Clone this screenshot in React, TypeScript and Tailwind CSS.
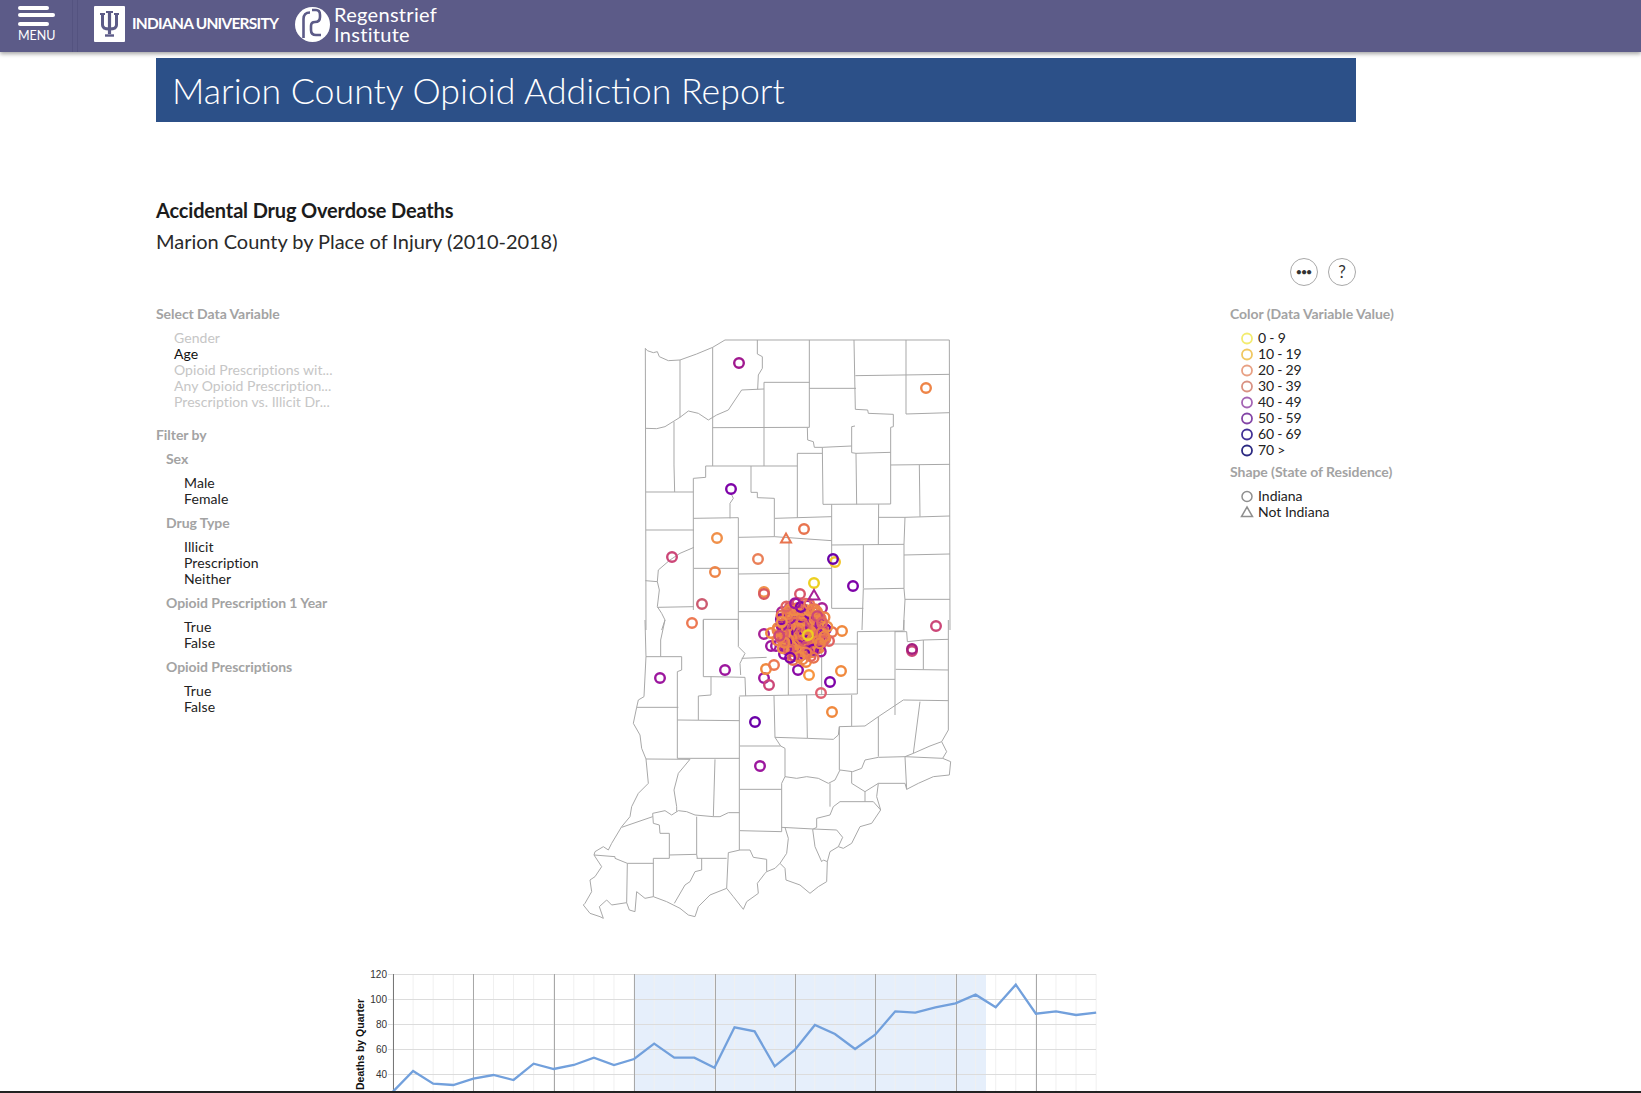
import React from 'react';

const fontLato = { fontFamily: 'Lato, "Open Sans", sans-serif' };

// county borders, traced in 3x units from the top of the map (origin 570,330)
const NORTH_LINES = [
  'M228,900 L226,55 L232,62 L250,68 L262,65 L268,80 L295,92 L330,90 L380,72 L428,52 L465,30 L1138,30 L1140,900',
  'M330,90 L330,262',
  'M428,52 L428,408',
  'M562,30 L562,72 L577,80 L577,115 L565,135 L563,178',
  'M718,30 L718,292 L712,292 L713,330 L730,335 L733,352 L757,352',
  'M852,30 L856,238',
  'M1008,30 L1008,252',
  'M856,137 L1138,133',
  'M228,295 L260,296 L285,290 L330,262 L355,243 L385,250 L415,270 L440,255 L475,240 L495,210 L515,180 L582,177',
  'M582,157 L582,408',
  'M582,157 L718,157',
  'M718,175 L858,175',
  'M428,293 L712,292',
  'M312,275 L312,405 L314,486',
  'M228,486 L370,486',
  'M407,408 L407,442 L370,445 L370,840',
  'M407,408 L682,408',
  'M543,408 L543,487 L562,487 L562,503 L613,505 L613,620',
  'M682,370 L682,563',
  'M682,370 L757,370',
  'M757,352 L845,348',
  'M757,352 L759,523',
  'M858,370 L860,523',
  'M845,368 L858,370 L962,367',
  'M845,290 L845,368',
  'M845,290 L855,288',
  'M856,238 L893,240 L895,250 L970,253 L970,290 L962,292 L962,522',
  'M1008,252 L1140,248',
  'M759,523 L962,522',
  'M962,405 L1140,403',
  'M1048,405 L1050,560',
  'M926,522 L925,643',
  'M926,562 L1005,562 L1140,558',
  'M785,523 L785,835',
  'M1005,562 L1002,643',
  'M785,645 L1002,643',
  'M880,645 L880,775 L876,900',
  'M1002,643 L1002,775 L1005,810 L1000,900',
  'M1002,675 L1140,672',
  'M882,777 L1002,775',
  'M1005,808 L1140,808',
  'M370,565 L505,563 L505,900',
  'M480,565 L480,520 L490,505 L483,490',
  'M615,565 L785,560',
  'M505,622 L613,620 L785,632',
  'M657,632 L657,845',
  'M657,715 L785,715',
  'M505,732 L657,730',
  'M372,715 L505,715',
  'M228,600 L372,600',
  'M372,652 L330,670 L300,690 L265,720 L262,755 L268,780 L262,830 L275,850 L285,870 L275,900',
  'M226,752 L262,755',
  'M262,832 L372,830',
  'M505,845 L660,845',
  'M400,868 L505,868',
  'M400,868 L400,900',
  'M785,835 L880,835',
];

// same thing for the bottom half (origin 570,620)
const SOUTH_LINES = [
  'M225,0 L228,110 L222,230 L205,240 L200,262 L190,310 L210,345 L215,385 L228,417 L235,490 L205,520 L185,560 L180,590 L155,620 L125,670 L115,690 L100,680 L75,695 L72,705 L95,740 L75,770 L60,780 L65,815 L45,850 L40,855 L60,880 L90,890 L100,895 L88,860 L110,840 L125,855 L170,848 L178,870 L195,875 L200,815 L225,835 L250,830 L290,845 L330,865 L355,885 L375,890 L385,860 L420,825 L470,805 L490,830 L520,868 L530,845 L565,820 L562,790 L585,760 L590,755 L615,745 L630,730 L645,745 L648,780 L690,795 L720,820 L745,800 L770,785 L772,725 L780,695 L805,680 L820,685 L845,670 L870,620 L905,610 L932,570 L920,530 L925,490 L1005,490 L1010,508 L1045,490 L1090,470 L1138,465 L1142,425 L1118,415 L1130,395 L1115,365 L1135,330 L1135,0',
  'M228,110 L335,110 L335,150 L322,155 L322,415',
  'M285,0 L272,60 L272,110',
  'M200,262 L325,262',
  'M400,0 L400,170 L423,170 L423,225 L385,228 L385,300',
  'M423,170 L525,172 L527,228',
  'M505,0 L505,80 L525,100 L510,130 L512,165',
  'M322,300 L508,302',
  'M508,230 L508,690',
  'M515,115 L590,112',
  'M508,228 L862,222 L862,35 L1000,33',
  'M755,72 L862,72',
  'M755,72 L755,225',
  'M655,110 L655,225',
  'M612,228 L615,352 L712,355 L790,358 L805,345 L808,320 L885,318 L925,290 L1000,240 L1135,242',
  'M710,225 L712,355',
  'M845,225 L845,318',
  'M862,178 L975,178',
  'M975,33 L975,285',
  'M975,35 L1010,35 L1012,65 L1060,60 L1135,58',
  'M1060,60 L1060,148',
  'M977,148 L1135,150',
  'M1002,0 L1002,33',
  'M1050,245 L1030,400 L1080,378 L1115,365',
  'M925,290 L925,410',
  'M808,320 L808,450',
  'M1030,400 L1005,410 L1118,415',
  'M1005,410 L1010,508',
  'M925,412 L1005,410',
  'M925,412 L885,420 L875,445 L848,455 L810,450 L795,480 L775,490 L745,475 L710,470 L680,475 L645,470 L635,490 L635,635',
  'M510,378 L632,378 L645,385 L645,470',
  'M615,352 L632,378',
  'M322,415 L508,415',
  'M228,417 L360,418 L325,460 L312,510 L320,560 L320,575',
  'M435,418 L430,590',
  'M510,508 L635,508',
  'M510,632 L635,635',
  'M635,622 L730,627 L800,630 L818,652 L805,680',
  'M248,580 L285,572 L305,585 L325,572 L350,575 L375,585 L430,590 L450,590 L475,578 L508,578',
  'M248,580 L250,610 L268,615 L270,640 L298,640 L298,715 L250,715 L250,830',
  'M155,622 L248,590',
  'M298,705 L380,703 L380,590',
  'M380,715 L470,715',
  'M380,703 L382,715',
  'M72,705 L135,710 L135,715 L172,730 L250,730',
  'M172,730 L170,848',
  'M395,715 L395,750 L375,755 L360,785 L345,795 L313,850',
  'M475,698 L510,690 L540,690 L550,712 L590,718 L590,755',
  'M475,698 L470,805',
  'M630,730 L650,700 L655,655 L645,622',
  'M772,725 L760,720 L755,725 L735,680 L728,628 L740,622 L740,595 L780,585 L790,560 L810,545 L910,545 L932,570',
  'M780,490 L780,560',
  'M885,515 L885,545',
  'M845,455 L845,490 L885,515 L925,490',
];

const POINTS: [number, number, string][] = [
  [739, 363, '#a0188f'], [926, 388, '#ee8548'], [731, 489, '#7e03a8'], [804, 529, '#e8744f'],
  [717, 538, '#f0904a'], [758, 559, '#ea8058'], [672, 557, '#cc4778'], [715, 572, '#ee8548'],
  [835, 562, '#f2c62c'], [833, 559, '#6a00a8'], [764, 592, '#f0904a'], [764, 594, '#d9595f'],
  [814, 583, '#edd020'], [853, 586, '#7e03a8'], [800, 594, '#d8576b'], [702, 604, '#cc5a70'],
  [692, 623, '#ed7953'], [936, 626, '#cc4778'], [912, 651, '#cc4778'], [912, 649, '#a51f7f'],
  [660, 678, '#9c179e'], [725, 670, '#9c179e'], [755, 722, '#6a00a8'], [760, 766, '#9c179e'],
  [832, 712, '#f0893e'], [821, 693, '#e06070'], [841, 671, '#f0893e'], [830, 682, '#7e03a8'],
  [809, 675, '#f89540'], [798, 670, '#8b0aa5'], [764, 678, '#9c179e'], [769, 685, '#cc4778'],
  [766, 669, '#f0893e'], [774, 665, '#ed7953'], [842, 631, '#f0893e'], [832, 632, '#e8744f'],
  [829, 641, '#e16462'], [764, 634, '#a82296'], [771, 646, '#9c179e'], [771, 633, '#f0893e'],
  [776, 646, '#9c179e'], [784, 654, '#8b0aa5'], [793, 660, '#e8744f'], [806, 662, '#f0893e'],
  [822, 608, '#a82296'], [790, 607, '#d8576b'], [782, 612, '#a82296'],
];

// the pile over Indianapolis, a fixed pseudo random spread
const CLUSTER_COLORS = ['#ee8548', '#e8744f', '#ef8a47', '#e16462', '#ee8548', '#9c179e', '#ed7953', '#cc4778', '#f0904a', '#e16462', '#7e03a8', '#ee8548'];
const CLUSTER = Array.from({ length: 230 }, (_, i) => {
  const angle = i * 2.39996;
  const dist = Math.sqrt((i + 1) / 230);
  const wobble = 1 + 0.14 * Math.sin(i * 1.7);
  return {
    x: 802 + Math.cos(angle) * dist * 24 * wobble,
    y: 631 + Math.sin(angle) * dist * 27 * wobble,
    c: CLUSTER_COLORS[(i * 7) % CLUSTER_COLORS.length],
  };
});

const SERIES = [425, 363, 401, 405, 386, 375, 390, 341, 357, 345, 323, 345, 327, 281, 323, 323, 353, 232, 244, 349, 300, 225, 252, 297, 254, 184, 188, 172, 160, 134, 172, 104, 191, 184, 195, 188];
const LINE = SERIES.map((y, i) => `${393 + i * 20.09},${950 + y / 3}`).join(' ');

const AGE_LEGEND = [
  { label: '0 - 9', color: '#f3ec70' },
  { label: '10 - 19', color: '#f0c862' },
  { label: '20 - 29', color: '#e8a184' },
  { label: '30 - 39', color: '#d99283' },
  { label: '40 - 49', color: '#a565b4' },
  { label: '50 - 59', color: '#8345a6' },
  { label: '60 - 69', color: '#423196' },
  { label: '70 >', color: '#2c2a82' },
];

function Header() {
  return (
    <header className="relative z-10 h-[52px] bg-[#5c5b88] shadow-[0_2px_4px_rgba(0,0,0,0.35)] flex items-stretch text-white">
      <div className="w-[73px] border-r border-[#545380] pl-[18px] pt-[6px]">
        <div className="h-[4px] w-[31px] rounded-sm bg-white" />
        <div className="h-[4px] w-[37px] rounded-sm bg-white mt-[3px]" />
        <div className="h-[4px] w-[31px] rounded-sm bg-white mt-[5px]" />
        <div className="text-[12.5px] leading-[14px] mt-[3px]">MENU</div>
      </div>
      <div className="w-[5px] border-r border-[#545380]" />
      <div className="ml-[16px] mt-[6px] w-[31px] h-[36px] bg-white rounded-[1px] flex items-center justify-center">
        <svg width="21" height="26" viewBox="0 0 21 26" fill="none" stroke="#5c5b88">
          <path d="M1 3H6M15 3H20M7 1H14" strokeWidth="2" />
          <path d="M3.5 3V14Q3.5 18 10.5 18Q17.5 18 17.5 14V3" strokeWidth="3" />
          <path d="M10.5 1V23" strokeWidth="3.2" />
          <path d="M6 24.5H15" strokeWidth="2.4" />
        </svg>
      </div>
      <div className="ml-[7px] mt-[14px] w-[150px] text-[15.5px] leading-[19px] font-bold whitespace-nowrap tracking-[-0.75px]">
        INDIANA UNIVERSITY
      </div>
      <div className="ml-[13px] mt-[7px] w-[35px] h-[35px]">
        <svg width="35" height="35" viewBox="0 0 35 35" fill="none">
          <circle cx="17.5" cy="17.5" r="17.5" fill="#ffffff" />
          <path d="M8.5 31V12Q8.5 5.5 15 5.5V5.5" stroke="#5c5b88" strokeWidth="2.6" />
          <path d="M17 3H21Q25 3 25 8V10Q25 15 20 15Q16 15 16 19V23Q16 28 21 28H26" stroke="#5c5b88" strokeWidth="2.6" />
        </svg>
      </div>
      <div className="ml-[4px] mt-[4px] text-[20px] leading-[20px] tracking-[0.3px]">
        <div>Regenstrief</div>
        <div>Institute</div>
      </div>
    </header>
  );
}

function SectionTitle({ children, indent }: { children: React.ReactNode; indent?: boolean }) {
  return (
    <div className={`h-4 text-[14px] leading-4 font-bold text-[#a3a3a3] tracking-[-0.05px] ${indent ? 'ml-[10px]' : ''}`}>
      {children}
    </div>
  );
}

function FilterGroup({ title, items, first }: { title: string; items: string[]; first?: boolean }) {
  return (
    <div className={first ? 'mt-[8px]' : 'mt-2'}>
      <SectionTitle indent>{title}</SectionTitle>
      <div className="mt-2 ml-[28px] text-[14px] leading-4 text-[#222222] tracking-[0.1px]">
        {items.map((item) => (
          <div key={item}>{item}</div>
        ))}
      </div>
    </div>
  );
}

function Sidebar() {
  const variables = ['Gender', 'Age', 'Opioid Prescriptions wit...', 'Any Opioid Prescription...', 'Prescription vs. Illicit Dr...'];
  return (
    <div className="w-[570px] shrink-0 pl-[156px]">
      <SectionTitle>Select Data Variable</SectionTitle>
      <div className="mt-2 ml-[18px] text-[14px] leading-4 text-[#c6c6c6] tracking-[0.05px]">
        {variables.map((v) => (
          <div key={v} className={v === 'Age' ? 'text-[#111111]' : ''}>
            {v}
          </div>
        ))}
      </div>
      <div className="mt-[17px]">
        <SectionTitle>Filter by</SectionTitle>
      </div>
      <FilterGroup first title="Sex" items={['Male', 'Female']} />
      <FilterGroup title="Drug Type" items={['Illicit', 'Prescription', 'Neither']} />
      <FilterGroup title="Opioid Prescription 1 Year" items={['True', 'False']} />
      <FilterGroup title="Opioid Prescriptions" items={['True', 'False']} />
    </div>
  );
}

function IndianaMap() {
  return (
    <svg className="mt-[24px] shrink-0" width="400" height="600" viewBox="570 330 400 600" fill="none">
      <g transform="translate(570 330) scale(0.33333)" stroke="#a8a8a8" strokeWidth="3">
        {NORTH_LINES.map((d) => (
          <path key={d} d={d} />
        ))}
      </g>
      <g transform="translate(570 620) scale(0.33333)" stroke="#a8a8a8" strokeWidth="3">
        {SOUTH_LINES.map((d) => (
          <path key={d} d={d} />
        ))}
      </g>
      <g strokeWidth="2.4">
        {POINTS.map(([x, y, c], i) => (
          <circle key={i} cx={x} cy={y} r="4.8" stroke={c} />
        ))}
        {CLUSTER.map((p, i) => (
          <circle key={i} cx={p.x} cy={p.y} r="4.8" stroke={p.c} />
        ))}
        <circle cx="808" cy="635" r="4.8" stroke="#edd020" />
        <path d="M786 533.5L791 542.5H781Z" stroke="#e8744f" strokeWidth="2" />
        <path d="M814 590L819.5 599.5H808.5Z" stroke="#a82296" strokeWidth="2" />
      </g>
    </svg>
  );
}

function Legend() {
  return (
    <div className="ml-[260px] w-[220px]">
      <SectionTitle>Color (Data Variable Value)</SectionTitle>
      <div className="mt-2 text-[14px] leading-4 text-[#222222] tracking-[-0.2px]">
        {AGE_LEGEND.map((row) => (
          <div key={row.label} className="flex items-center pl-[10px] gap-[4px]">
            <svg width="14" height="14" viewBox="0 0 14 14" fill="none">
              <circle cx="7" cy="7.5" r="5" stroke={row.color} strokeWidth="1.8" />
            </svg>
            <span>{row.label}</span>
          </div>
        ))}
      </div>
      <div className="mt-[6px] tracking-[-0.1px]">
        <SectionTitle>Shape (State of Residence)</SectionTitle>
      </div>
      <div className="mt-[8px] text-[14px] leading-4 text-[#222222]">
        <div className="flex items-center pl-[10px] gap-[4px]">
          <svg width="14" height="14" viewBox="0 0 14 14" fill="none">
            <circle cx="7" cy="7.5" r="5" stroke="#8f8f8f" strokeWidth="1.5" />
          </svg>
          <span>Indiana</span>
        </div>
        <div className="flex items-center pl-[10px] gap-[4px]">
          <svg width="14" height="14" viewBox="0 0 14 14" fill="none">
            <path d="M7 2L12.5 11.5H1.5Z" stroke="#8f8f8f" strokeWidth="1.5" />
          </svg>
          <span>Not Indiana</span>
        </div>
      </div>
    </div>
  );
}

function TimeChart() {
  const minor = Array.from({ length: 36 }, (_, i) => 393 + i * 20.09);
  const major = [473, 554, 634, 715, 795, 875, 956, 1036];
  const ticks = [
    { y: 974, label: '120' },
    { y: 999, label: '100' },
    { y: 1024, label: '80' },
    { y: 1049, label: '60' },
    { y: 1074, label: '40' },
  ];
  return (
    <svg className="block ml-[340px]" width="780" height="126" viewBox="340 965 780 126" fill="none">
      <rect x="634" y="974" width="352" height="117" fill="#e6effb" />
      {minor.map((x) => (
        <path key={x} d={`M${x} 974V1091`} stroke="#f0f0f0" />
      ))}
      {ticks.map((t) => (
        <path key={t.y} d={`M388 ${t.y + 0.5}H1096`} stroke="#dcdcdc" />
      ))}
      {major.map((x) => (
        <path key={x} d={`M${x + 0.5} 974V1091`} stroke="#a8a8a8" />
      ))}
      <path d="M393.5 974V1091" stroke="#777777" />
      {ticks.map((t) => (
        <text key={t.label} x="387" y={t.y + 4} textAnchor="end" fontSize="10" fontFamily="Liberation Sans, Arial, sans-serif" fill="#333333">
          {t.label}
        </text>
      ))}
      <text
        transform="translate(364 1090) rotate(-90)"
        fontSize="10.5"
        fontWeight="700"
        fontFamily="Liberation Sans, Arial, sans-serif"
        fill="#111111"
      >
        Deaths by Quarter
      </text>
      <polyline points={LINE} stroke="#72a0dc" strokeWidth="2.3" />
    </svg>
  );
}

export default function App() {
  return (
    <div className="h-[1093px] w-full overflow-hidden bg-white flex flex-col" style={fontLato}>
      <Header />
      <div className="ml-[156px] mt-[6px] w-[1200px] h-[64px] shrink-0 bg-[#2c5088] pl-[16px] text-white text-[35.7px] leading-[66px] font-light">
        Marion County Opioid Addiction Report
      </div>
      <div className="ml-[156px] mt-[74px] text-[20px] leading-7 font-bold text-[#1c1c1c] tracking-[-0.16px]">
        Accidental Drug Overdose Deaths
      </div>
      <div className="ml-[156px] mt-[3px] text-[20px] leading-7 text-[#2a2a2a] tracking-[-0.03px]">
        Marion County by Place of Injury (2010-2018)
      </div>
      <div className="ml-[156px] mt-[3px] w-[1200px] flex justify-end gap-[10px] text-[#333333]">
        <button className="w-[28px] h-[28px] rounded-full border border-[#a8a8a8] bg-white text-[9px] leading-[24px] font-black">
          •••
        </button>
        <button className="w-[28px] h-[28px] rounded-full border border-[#a8a8a8] bg-white text-[17px] leading-[24px]">
          ?
        </button>
      </div>
      <div className="mt-[20px] h-[659px] shrink-0 flex items-start">
        <Sidebar />
        <IndianaMap />
        <Legend />
      </div>
      <div className="flex-1 border-b-2 border-[#222222] overflow-hidden">
        <TimeChart />
      </div>
    </div>
  );
}
